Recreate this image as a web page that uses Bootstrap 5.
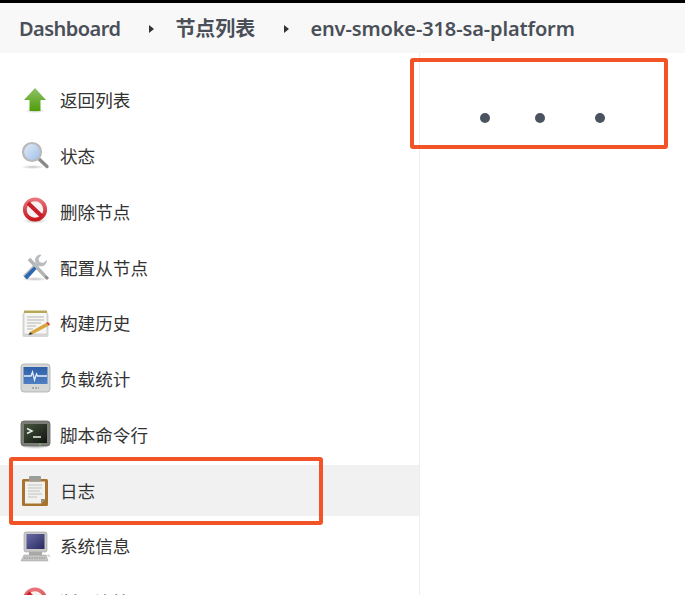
<!DOCTYPE html>
<html lang="zh-CN">
<head>
  <meta charset="UTF-8" />
  <meta name="viewport" content="width=device-width, initial-scale=1.0" />
  <title>env-smoke-318-sa-platform</title>
  <link href="https://cdn.jsdelivr.net/npm/bootstrap@5.3.0/dist/css/bootstrap.min.css" rel="stylesheet" />
  <style>
    html, body {
      height: 595px;
      overflow: hidden;
    }
    body {
      position: relative;
      background-color: #fff;
      border-top: 3px solid #000;
      font-family: "Noto Sans", "Noto Sans CJK SC", sans-serif;
    }
    .crumb-bar {
      height: 50px;
      padding: 2px 0 0 19px;
      background-color: #f8f8f8;
    }
    .crumb-bar .breadcrumb {
      --bs-breadcrumb-margin-bottom: 0;
      font-size: 20px;
      font-weight: 600;
    }
    .crumb-bar a {
      color: #4a4f58;
      text-decoration: none;
    }
    .crumb-bar .breadcrumb-item:first-child a { letter-spacing: -.55px; }
    .crumb-bar .breadcrumb-item:last-child a { letter-spacing: -.12px; }
    .crumb-bar .breadcrumb-item + .breadcrumb-item {
      padding-left: 0;
    }
    .crumb-bar .breadcrumb-item + .breadcrumb-item::before {
      content: "";
      float: none;
      display: inline-block;
      width: 0;
      height: 0;
      padding: 0;
      margin: 0 21px 3px 29px;
      border-left: 5px solid #333;
      border-top: 4px solid transparent;
      border-bottom: 4px solid transparent;
    }
    .side-col {
      width: 420px;
      height: 542px;
      padding-top: 22px;
      border-right: 1px solid #eee;
    }
    .side-item {
      flex: none;
      height: 51px;
      margin-bottom: 4.75px;
      padding: 0 0 0 20px;
      gap: 8px;
      color: #333;
      font-size: 17.6px;
      font-family: "Noto Sans CJK SC", "Noto Sans", sans-serif;
    }
    .side-item:hover { color: #333; }
    .side-item.on { background-color: #f1f1f1; }
    .side-item svg { flex: none; }
    .dots {
      padding: 60px 0 0 60px;
    }
    .dot {
      width: 10px;
      height: 10px;
      border-radius: 50%;
      background-color: #4b5260;
      margin-right: 45px;
    }
    .dot:nth-child(2) { margin-right: 50px; }
    .mark-box {
      position: absolute;
      border: 4px solid #f25428;
      border-radius: 3px;
    }
    .mark-top { left: 410px; top: 55px; width: 258px; height: 91px; }
    .mark-log { left: 9px; top: 454px; width: 314px; height: 68px; }
  </style>
</head>
<body>
  <svg width="0" height="0" class="d-block">
    <defs>
      <linearGradient id="gGreen" x1="0" y1="0" x2="0" y2="1"><stop offset="0" stop-color="#8fc06a"/><stop offset="1" stop-color="#4f9e08"/></linearGradient>
      <linearGradient id="gBlue" x1="0" y1="0" x2="1" y2="1"><stop offset="0" stop-color="#e4eefa"/><stop offset="1" stop-color="#9dbde6"/></linearGradient>
      <linearGradient id="gRed" x1="0" y1="0" x2="0" y2="1"><stop offset="0" stop-color="#e8737a"/><stop offset="1" stop-color="#c8181f"/></linearGradient>
      <linearGradient id="gScreen" x1="0" y1="0" x2="0" y2="1"><stop offset="0" stop-color="#2f5fa8"/><stop offset="1" stop-color="#4f80c4"/></linearGradient>
      <linearGradient id="gTerm" x1="0" y1="0" x2="1" y2="1"><stop offset="0" stop-color="#46563f"/><stop offset="1" stop-color="#10140f"/></linearGradient>
      <linearGradient id="gPc" x1="0" y1="0" x2="1" y2="1"><stop offset="0" stop-color="#6a6aa8"/><stop offset="1" stop-color="#2a2a60"/></linearGradient>
      <radialGradient id="gShade"><stop offset="0" stop-color="#888" stop-opacity=".5"/><stop offset="1" stop-color="#888" stop-opacity="0"/></radialGradient>
      <symbol id="i-stop" viewBox="0 0 32 32">
        <ellipse cx="15" cy="25" rx="13" ry="2.500" fill="url(#gShade)"/>
        <circle cx="15" cy="13.500" r="10.200" fill="#f7f2f2" stroke="url(#gRed)" stroke-width="3.800"/>
        <path d="M8 7 22 20.500" stroke="#c8202a" stroke-width="4"/>
      </symbol>
    </defs>
  </svg>

  <nav class="crumb-bar d-flex align-items-center">
    <ol class="breadcrumb">
      <li class="breadcrumb-item"><a href="#">Dashboard</a></li>
      <li class="breadcrumb-item"><a href="#">节点列表</a></li>
      <li class="breadcrumb-item"><a href="#">env-smoke-318-sa-platform</a></li>
    </ol>
  </nav>

  <div class="d-flex">
    <div class="side-col nav flex-column flex-nowrap overflow-hidden">
      <a class="side-item nav-link d-flex align-items-center" href="#">
        <svg width="32" height="32" viewBox="0 0 32 32">
          <ellipse cx="15" cy="26" rx="10" ry="2" fill="url(#gShade)"/>
          <path d="M15 3 26 15H20.500V26H9.500V15H4Z" fill="url(#gGreen)"/>
        </svg>
        返回列表
      </a>
      <a class="side-item nav-link d-flex align-items-center" href="#">
        <svg width="32" height="32" viewBox="0 0 32 32">
          <ellipse cx="13" cy="27" rx="12" ry="2" fill="url(#gShade)"/>
          <path d="M18.500 18.500 27 26.500" stroke="#8a8a8a" stroke-width="3.400" stroke-linecap="round"/>
          <circle cx="12" cy="12" r="9" fill="url(#gBlue)" stroke="#b9b9b9" stroke-width="2.200"/>
        </svg>
        状态
      </a>
      <a class="side-item nav-link d-flex align-items-center" href="#">
        <svg width="32" height="32"><use href="#i-stop"/></svg>
        删除节点
      </a>
      <a class="side-item nav-link d-flex align-items-center" href="#">
        <svg width="32" height="32" viewBox="0 0 32 32">
          <ellipse cx="15" cy="27" rx="14" ry="2" fill="url(#gShade)"/>
          <path d="M9 7 25 24" stroke="#b4b4b4" stroke-width="3.400"/>
          <path d="M25 24 28 27" stroke="#8d8d8d" stroke-width="3"/>
          <path d="M20 2.500a6 6 0 0 0-4.500 8.500L3 23.500l3 3.500L19 14a6 6 0 0 0 8-6l-4 3-3.500-1-1-3.500 3-3.500z" fill="#b9bcc0"/>
          <path d="M14 14.500 4 24.500l3 3 9.500-10.500z" fill="#2e68ad"/>
        </svg>
        配置从节点
      </a>
      <a class="side-item nav-link d-flex align-items-center" href="#">
        <svg width="32" height="32" viewBox="0 0 32 32">
          <rect x="2.500" y="5" width="26" height="24" rx="1.500" fill="#d8d8d8"/>
          <rect x="4" y="4" width="23" height="22" fill="#f6f6f4" stroke="#c4c4c4" stroke-width=".6"/>
          <path d="M4 2.500h23V5H4z" fill="#b9a85a"/>
          <path d="M7 9h17M7 12h17M7 15h14M7 18h9M7 21h6" stroke="#b5b5b5"/>
          <path d="M10 24 26 15l3 2.500L13 26z" fill="#d9a53c"/>
          <path d="M26 15l2-1 2 2.500-1 1z" fill="#d8362e"/>
          <path d="M10 24 13 26l-4.500 1z" fill="#4a3a20"/>
        </svg>
        构建历史
      </a>
      <a class="side-item nav-link d-flex align-items-center" href="#">
        <svg width="32" height="32" viewBox="0 0 32 32">
          <rect x="1" y="1" width="29" height="28" rx="3" fill="#d5d6d6" stroke="#a9a9a9" stroke-width=".8"/>
          <rect x="3.500" y="4" width="24" height="17" fill="url(#gScreen)"/>
          <path d="M4 13h7l1.500-4 2 8 2-6 1 2h9.500" fill="none" stroke="#e6f0fa" stroke-width="1.300"/>
          <path d="M12 25h7" stroke="#9c9c9c" stroke-width="1.500" stroke-dasharray="2 1"/>
        </svg>
        负载统计
      </a>
      <a class="side-item nav-link d-flex align-items-center" href="#">
        <svg width="32" height="32" viewBox="0 0 32 32">
          <ellipse cx="15" cy="28" rx="14" ry="2" fill="url(#gShade)"/>
          <rect x="1" y="2" width="29" height="25" rx="3" fill="#7b7e78" stroke="#63655f" stroke-width=".8"/>
          <rect x="4" y="5" width="23" height="19" fill="url(#gTerm)"/>
          <path d="M7 9.500 12 12 7 14.500" fill="none" stroke="#e8efe8" stroke-width="1.500"/>
          <path d="M13 18h8" stroke="#e8efe8" stroke-width="1.500"/>
          <circle cx="20" cy="25.600" r=".8" fill="#7ce04a"/>
        </svg>
        脚本命令行
      </a>
      <a class="side-item on nav-link d-flex align-items-center" href="#">
        <svg width="32" height="32" viewBox="0 0 32 32">
          <rect x="2" y="4" width="26" height="27" rx="1.500" fill="#a8732e"/>
          <path d="M5 6.500h20V24l-4 4.500H5z" fill="#f1f1ef"/>
          <path d="M21 28.500 25 24h-4z" fill="#8f8f8f"/>
          <rect x="9" y="1" width="12" height="5.500" rx="1" fill="#9c9c98"/>
          <path d="M8 10h14M8 13h14M8 16h12M8 19h14M8 22h9" stroke="#c2c2c0"/>
        </svg>
        日志
      </a>
      <a class="side-item nav-link d-flex align-items-center" href="#">
        <svg width="32" height="32" viewBox="0 0 32 32">
          <rect x="4" y="1" width="23" height="20" rx="2" fill="#c9cac8" stroke="#9a9a9a" stroke-width=".6"/>
          <rect x="6.500" y="3" width="18" height="15" fill="url(#gPc)"/>
          <path d="M9 21h13v3H9z" fill="#a9aaa8"/>
          <path d="M4 24h22l2 6H1z" fill="#c4c5c3" stroke="#9a9a9a" stroke-width=".5"/>
          <path d="M4 27h21" stroke="#8f8f8f" stroke-dasharray="1.500 1"/>
          <path d="M27 25c2-2 3 0 2 1" fill="none" stroke="#b5b5b5"/>
        </svg>
        系统信息
      </a>
      <a class="side-item nav-link d-flex align-items-center" href="#">
        <svg width="32" height="32"><use href="#i-stop"/></svg>
        断开连接
      </a>
    </div>

    <div class="dots d-flex align-items-start">
      <span class="dot"></span>
      <span class="dot"></span>
      <span class="dot"></span>
    </div>
  </div>

  <div class="mark-box mark-top"></div>
  <div class="mark-box mark-log"></div>

  <script src="https://cdn.jsdelivr.net/npm/bootstrap@5.3.0/dist/js/bootstrap.bundle.min.js"></script>
</body>
</html>
